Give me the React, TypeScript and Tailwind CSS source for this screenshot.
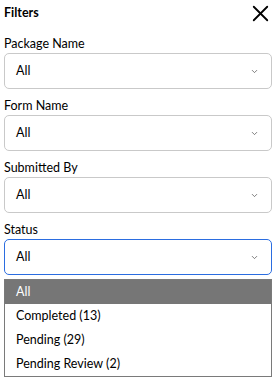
import { X, ChevronDown } from "lucide-react";

const fields = ["Package Name", "Form Name", "Submitted By"];
const options = ["Completed (13)", "Pending (29)", "Pending Review (2)"];

function Select({ active }: { active?: boolean }) {
  return (
    <div
      className={`flex h-[36px] items-center justify-between rounded-[5px] bg-white pl-[11px] pr-[12px] text-[12.5px] text-black ${
        active ? "border-[1.5px] border-[#2b6de0]" : "border border-[#c9c9c9]"
      }`}
    >
      <span>All</span>
      <ChevronDown size={9} strokeWidth={2} className="text-[#555]" />
    </div>
  );
}

export default function App() {
  return (
    <div
      className="relative h-[378px] w-[276px] overflow-hidden bg-white px-[4px]"
      style={{ fontFamily: 'Lato, "Open Sans", sans-serif' }}
    >
      <div className="flex h-[27px] items-center justify-between">
        <span className="text-[12.5px] font-bold text-black">Filters</span>
        <X size={27} strokeWidth={1.6} className="-mr-[2px] text-black" />
      </div>

      <div className="mt-[8px] flex flex-col gap-[8px]">
        {fields.map((f) => (
          <div key={f}>
            <div className="text-[12.5px] leading-[18px] text-black">{f}</div>
            <Select />
          </div>
        ))}

        <div className="relative">
          <div className="text-[12.5px] leading-[18px] text-black">Status</div>
          <Select active />
          <div className="absolute left-0 right-0 top-full z-10 mt-[4px] border border-[#7a7a7a] bg-white text-[12.5px]">
            <div className="flex h-[24px] items-center bg-[#767676] pl-[11px] text-white">All</div>
            {options.map((o) => (
              <div key={o} className="flex h-[24px] items-center pl-[11px] text-black">
                {o}
              </div>
            ))}
          </div>
        </div>
      </div>
    </div>
  );
}
